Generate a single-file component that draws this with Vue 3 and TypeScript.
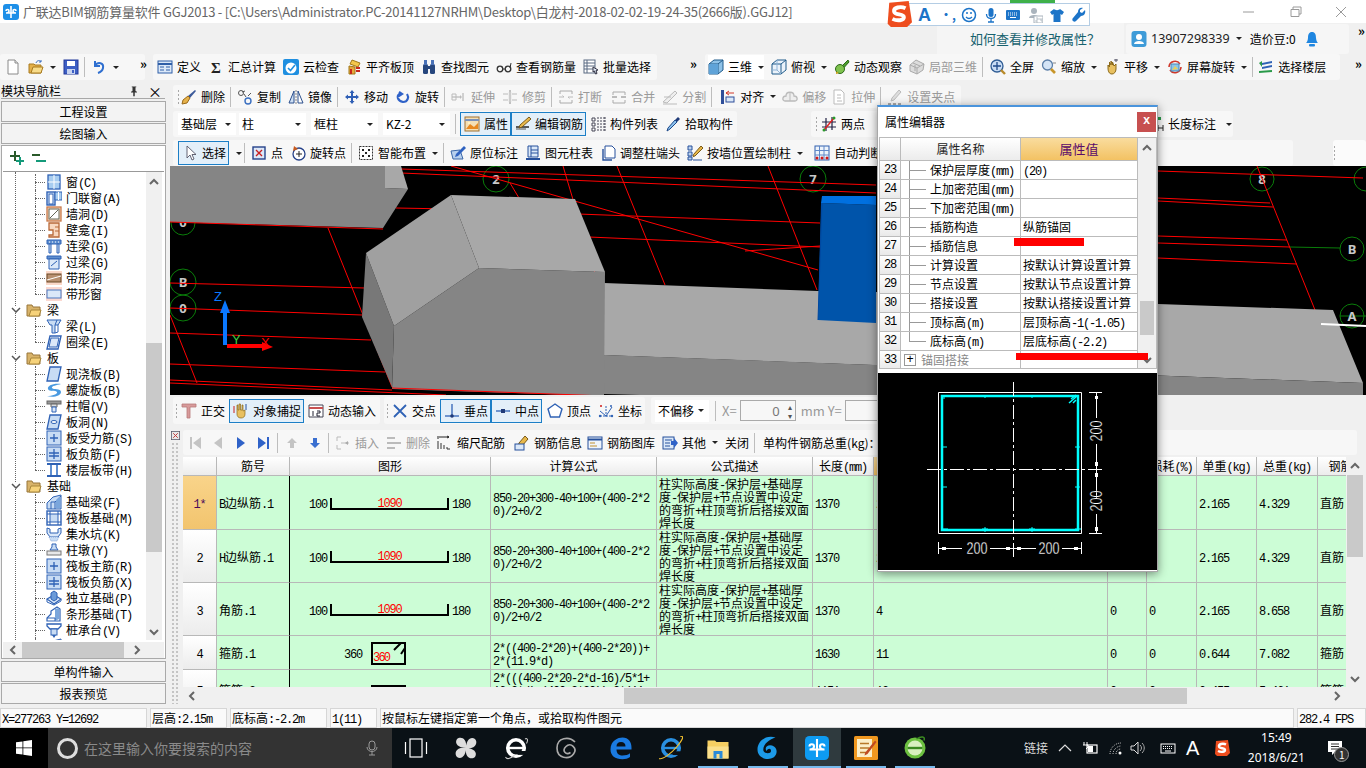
<template>
  <div class="app">
    <!-- title bar -->
    <div class="title">
      <span class="logo"><Ic n="gld" /></span>
      <span class="title-text">广联达BIM钢筋算量软件 GGJ2013 - [C:\Users\Administrator.PC-20141127NRHM\Desktop\白龙村-2018-02-02-19-24-35(2666版).GGJ12]</span>
      <div class="win-btns">
        <svg width="46" height="12"><path d="M17 6h11" stroke="#9a9a9a" /></svg>
        <svg width="46" height="12"><path d="M19 3.500h8v7h-8zM21 3v-2h8v7h-2" fill="none" stroke="#9a9a9a" /></svg>
        <svg width="46" height="12"><path d="M18 1l10 10M28 1l-10 10" stroke="#9a9a9a" /></svg>
      </div>
    </div>

    <!-- sogou IME bar floats over the title bar -->
    <div class="ime">
      <div class="ime-top"></div>
      <Ic n="sogou" class="ime-s" />
      <div class="ime-bar">
        <span class="ime-a">A</span>
        <span class="ime-dot">•,</span>
        <Ic n="smile" /><Ic n="mic" /><Ic n="kbd" /><Ic n="user24" /><Ic n="shirt" /><Ic n="wrench" />
      </div>
    </div>

    <!-- help and account strip -->
    <div class="menu">
      <div class="help">如何查看并修改属性？</div>
      <div class="account">
        <Ic n="avatar" />
        <span class="phone">13907298339</span>
        <b class="caret"></b>
        <span class="beans">造价豆:0</span>
        <Ic n="bell" />
      </div>
      <span class="more acc-more">»</span>
    </div>

    <!-- first toolbar line -->
    <div class="row1">
      <div class="grp g1a">
        <Tool v-for="(it, i) in row1a" :key="i" v-bind="it" />
        <span class="more">»</span>
      </div>
      <div class="grp g1b">
        <Tool v-for="(it, i) in row1b" :key="i" v-bind="it" />
      </div>
      <span class="more m1c">»</span>
      <div class="grp g1c">
        <Tool v-for="(it, i) in row1c" :key="i" v-bind="it" />
      </div>
      <span class="more m1d">»</span>
    </div>

    <div class="main">
      <!-- module navigator -->
      <aside class="nav">
        <div class="nav-head">
          <span>模块导航栏</span>
          <Ic n="pin" class="nav-pin" />
          <span class="nav-x">×</span>
        </div>
        <button class="nav-btn first">工程设置</button>
        <button class="nav-btn">绘图输入</button>
        <div class="nav-box">
          <div class="nav-tools"><Ic n="plusTree" /><Ic n="minusTree" /></div>
          <div class="tree-wrap">
            <div class="tree">
              <div
                v-for="(r, i) in tree"
                :key="i"
                class="tree-row"
                :class="{ folder: r.folder, last: r.last }"
              >
                <svg v-if="r.folder" class="tw" width="10" height="6"><path d="M1 1l4 4 4-4" fill="none" stroke="#555" stroke-width="1.500" /></svg>
                <Ic :n="r.ic" />
                <span><Tx :t="r.t" /></span>
              </div>
            </div>
            <div class="vscroll tree-v">
              <Ic n="chevU" />
              <div class="thumb"></div>
              <Ic n="chevD" class="down" />
            </div>
          </div>
          <div class="hscroll tree-h">
            <Ic n="chevL" />
            <div class="thumb"></div>
            <Ic n="chevR" class="right" />
          </div>
        </div>
        <button class="nav-btn btm">单构件输入</button>
        <button class="nav-btn">报表预览</button>
      </aside>

      <section class="work">
        <div class="bar r2">
          <div class="grp g2">
            <i class="grip"></i>
            <Tool v-for="(it, i) in row2" :key="i" v-bind="it" />
          </div>
        </div>

        <div class="bar r3">
          <div class="grp g3">
            <div v-for="c in combos" :key="c.t" class="combo" :style="{ width: c.w + 'px', marginRight: c.gap + 'px' }">
              <span>{{ c.t }}</span><b class="caret"></b>
            </div>
            <Tool v-for="(it, i) in row3" :key="i" v-bind="it" />
          </div>
          <div class="grp g3b">
            <i class="grip"></i>
            <Tool ic="twopt" t="两点" />
            <span class="len-mark"><Ic n="len" /><span>长度标注</span><b class="caret"></b></span>
          </div>
        </div>

        <div class="bar r4">
          <div class="grp g4">
            <Tool v-for="(it, i) in row4" :key="i" v-bind="it" />
          </div>
          <div class="end-grip"><i class="grip"></i></div>
        </div>

        <!-- 3D view: a free canvas, page coordinates -->
        <svg class="view" viewBox="170 166 1196 229" width="1196" height="229">
          <rect x="170" y="166" width="1196" height="229" fill="#000" />
          <g fill="none" stroke="#0a7d0a">
            <circle cx="496" cy="179" r="13" /><circle cx="813" cy="179" r="13" />
            <circle cx="183" cy="223" r="12" /><circle cx="183" cy="282" r="13" /><circle cx="183" cy="308" r="13" />
            <circle cx="1262" cy="179" r="12" /><circle cx="1366" cy="179" r="12" />
            <circle cx="1352" cy="249" r="12" /><circle cx="1352" cy="316" r="12" />
            <path d="M1290 247l50 1M1340 316h26" />
          </g>
          <g font-family="'Noto Sans',sans-serif" font-size="13" font-weight="700" fill="#c8c8c8" text-anchor="middle">
            <text x="496" y="184">2</text><text x="813" y="184">7</text><text x="1262" y="184">8</text>
            <text x="183" y="287">B</text><text x="183" y="313">0</text><text x="183" y="227">0</text>
            <text x="1352" y="254">B</text><text x="1352" y="321">A</text>
          </g>
          <g stroke="#f00" fill="none">
            <path v-for="(d, i) in redLines" :key="i" :d="d" />
          </g>
          <path d="M170 166H385V188L408 189 383 228 170 222z" fill="#858585" />
          <path d="M385 166h16l7 23-23-1z" fill="#a8a8a8" />
          <path d="M604 283L818 291 876 292 1158 304 1333 310 1363 383 601 355z" fill="#a8a8a8" />
          <path d="M392 388L605 355 1363 383V395H640z" fill="#858585" />
          <path d="M366 253L394 326 392 387 362 317z" fill="#787878" />
          <path d="M394 326L479 268 605 272 604 396 392 389z" fill="#858585" />
          <path d="M366 253L451 195 479 268 394 326z" fill="#a0a0a0" />
          <path d="M451 195L575 199 605 272 479 268z" fill="#a8a8a8" />
          <path d="M821 203L876 205V323L818 320z" fill="#0054aa" />
          <path d="M822 196L876 196V205L821 203z" fill="#0070e0" />
          <path d="M818 320l4-117" stroke="#0048a0" />
          <path d="M392 388L605 396" stroke="#f00" />
          <path d="M170 222L383 229" stroke="#f00" />
          <path d="M225 345V312" stroke="#0a78ff" stroke-width="4" />
          <path d="M225 300l-5 13h10z" fill="#0a78ff" />
          <path d="M227 346h38" stroke="#f00" stroke-width="4" />
          <path d="M273 347l-11-5v9z" fill="#f00" />
          <g font-family="'Liberation Sans',sans-serif" font-size="13">
            <text x="214" y="301" fill="#0a78ff">Z</text>
            <text x="232" y="344" fill="#3ecf3e">Y</text>
            <text x="261" y="347" fill="#f00">X</text>
          </g>
          <path d="M1321 324l45 2" stroke="#fff" stroke-width="2" />
        </svg>

        <div class="bar r5">
          <div class="grp g5a">
            <i class="grip"></i>
            <Tool v-for="(it, i) in snap1" :key="i" v-bind="it" />
          </div>
          <div class="grp g5b">
            <i class="grip"></i>
            <Tool v-for="(it, i) in snap2" :key="i" v-bind="it" />
          </div>
          <div class="grp g5c">
            <div class="combo offset"><span>不偏移</span><b class="caret"></b></div>
            <i class="sep"></i>
            <span class="dim">X=</span>
            <div class="spin">0<span class="spin-arrows">▴<br />▾</span></div>
            <span class="dim">mm Y=</span>
            <div class="spin">0</div>
          </div>
        </div>

        <div class="lower">
          <div class="side-grip"><Ic n="closeBox" class="side-x" /></div>
          <div class="lower-body">
            <div class="grp lower-bar">
              <Tool v-for="(it, i) in lowerBar" :key="i" v-bind="it" />
              <span class="total">单构件钢筋总重(kg)：</span>
            </div>
            <div class="tbl-frame">
              <div class="tbl-clip">
                <table class="rebar">
                  <colgroup><col v-for="(w, i) in colWidths" :key="i" :style="{ width: w + 'px' }" /></colgroup>
                  <thead>
                    <tr>
                      <th v-for="(c, i) in columns" :key="i" :class="{ cur: i === 6 }"><Tx :t="c" /></th>
                    </tr>
                  </thead>
                  <tbody>
                    <tr v-for="(r, i) in rows" :key="i" :style="{ height: r.h + 'px' }">
                      <td class="num" :class="{ cur: i === 0 }"><Tx :t="r.n" /></td>
                      <td class="name"><Tx :t="r.name" /></td>
                      <td class="shape">
                        <div v-if="r.kind === 'bar'" class="shape-bar">
                          <span><Tx t="100" /></span>
                          <div class="u-bar"><Tx t="1090" /></div>
                          <span><Tx t="180" /></span>
                        </div>
                        <div v-else class="shape-tie" :class="{ clipped: r.n === '5' }">
                          <span v-if="r.n === '4'"><Tx t="360" /></span>
                          <svg width="36" height="24" viewBox="0 0 36 24">
                            <path d="M1 2h33v21H1z" fill="none" stroke="#000" stroke-width="2" />
                            <path d="M23 9l7-7M30 13l4-6" stroke="#000" stroke-width="2" />
                            <text v-if="r.n === '4'" x="2" y="20" fill="#f00" font-size="12" font-family="'Liberation Mono',monospace" textLength="18">360</text>
                          </svg>
                        </div>
                      </td>
                      <td class="wrapcell"><Tx :t="r.f" /></td>
                      <td class="desc"><Tx :t="r.d" /></td>
                      <td><Tx :t="r.len" /></td>
                      <td><Tx :t="r.cnt" /></td>
                      <td><Tx t="0" /></td>
                      <td><Tx t="0" /></td>
                      <td><Tx :t="r.unit" /></td>
                      <td><Tx :t="r.total" /></td>
                      <td><Tx :t="r.kindName" /></td>
                    </tr>
                  </tbody>
                </table>
              </div>
              <div class="vscroll tbl-v">
                <Ic n="chevU" />
                <div class="thumb"></div>
                <Ic n="chevD" class="down" />
              </div>
            </div>
            <div class="hscroll tbl-h">
              <Ic n="chevL" />
              <div class="thumb"></div>
              <Ic n="chevR" class="right" />
            </div>
          </div>
        </div>
      </section>
    </div>

    <!-- status bar -->
    <div class="status">
      <div v-for="s in statusCells" :key="s.t" class="cell" :style="{ width: s.w + 'px' }"><Tx :t="s.t" /></div>
    </div>

    <!-- windows taskbar -->
    <div class="taskbar">
      <div class="start"><Ic n="winLogo" /></div>
      <div class="search">
        <span class="cortana"></span>
        <span class="search-text">在这里输入你要搜索的内容</span>
        <Ic n="micGray" class="search-mic" />
      </div>
      <div
        v-for="a in taskApps"
        :key="a.ic"
        class="slot"
        :class="{ run: a.run, active: a.active }"
        :style="{ marginLeft: a.m + 'px' }"
      >
        <Ic :n="a.ic" />
      </div>
      <div class="tray">
        <span class="links">链接</span>
        <svg width="14" height="10"><path d="M1 8l6-6 6 6" fill="none" stroke="#ddd" stroke-width="1.200" /></svg>
        <Ic n="plug" />
        <Ic n="wifi" />
        <Ic n="speaker" class="tray-spk" />
        <Ic n="trayKbd" />
        <span class="tray-a">A</span>
        <Ic n="sogou" class="tray-s" />
        <div class="clock">15:49<br />2018/6/21</div>
        <div class="notif"><Ic n="note" /><span class="badge">1</span></div>
      </div>
    </div>

    <!-- property editor dialog -->
    <div class="dialog">
      <div class="dlg-head">
        <span>属性编辑器</span>
        <span class="dlg-close">x</span>
      </div>
      <div class="dlg-grid">
        <div class="dlg-table">
          <div class="dlg-row hd">
            <span class="rn"></span>
            <span class="pname">属性名称</span>
            <span class="pval">属性值</span>
          </div>
          <div v-for="p in props" :key="p.n" class="dlg-row">
            <span class="rn">{{ p.n }}</span>
            <span class="pname" :class="{ lastp: p.n === 32, group: p.n === 33 }">
              <i v-if="p.n === 33" class="plusbox">+</i>
              <Tx :t="p.k" />
            </span>
            <span class="pval"><Tx :t="p.v" /></span>
          </div>
        </div>
        <div class="vscroll dlg-v">
          <Ic n="chevU" />
          <div class="thumb"></div>
          <Ic n="chevD" class="down" />
        </div>
      </div>
      <svg class="preview" viewBox="878 373 279 197" width="279" height="197">
        <rect x="878" y="373" width="279" height="197" fill="#000" />
        <path d="M938.500 392.500H1081.500V533.500H938.500z" fill="none" stroke="#fff" />
        <path d="M942 396H1078V530H942z" fill="none" stroke="#0ff" stroke-width="2.500" />
        <path d="M1071 399l5-4M1069 403l7-6M1073 403l3-3" stroke="#0ff" stroke-width="1.500" />
        <g stroke="#0ff">
          <path d="M985 397v1M1032 397v1M985 527v5M982 529h6M1032 527v5M1029 529h6M1075 529h6M1078 526v5M942 529h6M942 447h5M942 487h5M1075 447h5M1078 444v6M1075 487h5M1078 484v6M942 398h3" />
        </g>
        <g stroke="#fff" stroke-dasharray="14 3 3 3">
          <path d="M1013.500 382V559" />
          <path d="M927 469.500H1104" />
        </g>
        <g stroke="#fff" fill="none">
          <path d="M1089 392.500h13M1089 533.500h13M938.500 542v12M1081.500 542v12" />
          <path d="M1096.500 393v25M1096.500 444v54M1096.500 514v20M938 548.500h24M990 548.500h46M1062 548.500h20" />
        </g>
        <g fill="#fff">
          <rect x="1095" y="396" width="3" height="3" /><rect x="1095" y="462" width="3" height="4" />
          <rect x="1095" y="473" width="3" height="4" /><rect x="1095" y="527" width="3" height="4" />
          <rect x="942" y="547" width="4" height="3" /><rect x="1006" y="547" width="4" height="3" />
          <rect x="1017" y="547" width="4" height="3" /><rect x="1074" y="547" width="4" height="3" />
        </g>
        <g fill="#fff" font-family="'Liberation Sans',sans-serif" font-size="16" text-anchor="middle" stroke="#000" stroke-width="0.300">
          <text x="977" y="554" textLength="21" lengthAdjust="spacingAndGlyphs">200</text>
          <text x="1049" y="554" textLength="21" lengthAdjust="spacingAndGlyphs">200</text>
          <text transform="translate(1102,431) rotate(-90)" textLength="21" lengthAdjust="spacingAndGlyphs">200</text>
          <text transform="translate(1102,501) rotate(-90)" textLength="21" lengthAdjust="spacingAndGlyphs">200</text>
        </g>
      </svg>
      <i class="mark m-a"></i>
      <i class="mark m-b"></i>
    </div>
  </div>
</template>

<script setup lang="ts">
import { h, Fragment } from 'vue'

interface Item {
  ic?: string
  t?: string
  off?: boolean
  on?: boolean
  caret?: boolean
  lite?: boolean
  sep?: boolean
  m?: number
}

const icons: Record<string, string> = {
  gld: '<rect width="16" height="16" rx="3" fill="#1c8fe8"/><path d="M8 2v12M3 7c0-2 3-2 3 0s-3 2-3 2h10s-3 0-3-2 3-2 3 0" fill="none" stroke="#fff" stroke-width="1.600"/>',
  sogou: '<path d="M2 1l12-1 2 13-3 3H3L1 14z" fill="#ee4d1e"/><path d="M12 4.500C9 3 4.500 4 5 6.500 5.500 9 11 7.500 11 10c0 2-4 2.500-7 1" fill="none" stroke="#fff" stroke-width="2.400"/>',
  smile: '<circle cx="8" cy="8" r="6.500" fill="#fff" stroke="#1c74c8" stroke-width="1.500"/><circle cx="6" cy="6" r="1" fill="#1c74c8"/><circle cx="10" cy="6" r="1" fill="#1c74c8"/><path d="M5 10c2 2 4 2 6 0" fill="none" stroke="#1c74c8" stroke-width="1.300"/>',
  mic: '<rect x="5.500" y="1" width="5" height="9" rx="2.500" fill="#1c74c8"/><path d="M3.500 7c0 6 9 6 9 0M8 12v3M5 15h6" fill="none" stroke="#1c74c8" stroke-width="1.300"/>',
  kbd: '<rect x="1" y="3" width="14" height="10" rx="1" fill="#1c74c8"/><path d="M3 6h10M3 8h10" stroke="#fff" stroke-dasharray="1 1"/><path d="M5 10.500h6" stroke="#fff"/>',
  user24: '<circle cx="7" cy="4" r="3" fill="#aab4bd"/><path d="M2 11c0-4 10-4 10 0z" fill="#aab4bd"/><rect x="7" y="9" width="9" height="7" fill="#fff" stroke="#aab4bd"/><path d="M9 11h2v2H9v2h2M13 11v2h2M15 11v4" fill="none" stroke="#aab4bd" stroke-width=".8"/>',
  shirt: '<path d="M5 2L1 5l2 3 1.500-1v8h7V7L13 8l2-3-4-3c-1 1.500-5 1.500-6 0z" fill="#1c74c8"/>',
  wrench: '<path d="M14 3l-3 3-2-1 0-2 3-2c-3-1-5 1-5 4L2 11c-2 2 1 5 3 3l5-5c3 0 5-3 4-6z" fill="#1c74c8"/>',
  avatar: '<rect x=".5" y="0" width="15" height="16" rx="3" fill="#3e9bd8"/><circle cx="8" cy="6" r="3" fill="#fff"/><path d="M3 13c0-4 10-4 10 0z" fill="#fff"/>',
  bell: '<path d="M8 1c3 0 4 2.500 4 6 0 3 2 5 2 5H2s2-2 2-5c0-3.500 1-6 4-6z" fill="#1f86e0"/><rect x="5" y="13" width="6" height="2.500" rx="1" fill="#1f86e0"/>',
  new: '<path d="M3 1h7l3 3v11H3z" fill="#fff" stroke="#8a8a8a"/><path d="M10 1v3h3" fill="#e8e8e8" stroke="#8a8a8a"/>',
  open: '<path d="M1 5h5l1 1h6v8H1z" fill="#e4b04a" stroke="#a87a20"/><path d="M3 14l2-6h10l-2 6z" fill="#f8dc8a" stroke="#a87a20"/><path d="M8 4c1-3 4-3 5-1M13 1v2h-2" stroke="#3a6fc0" fill="none"/>',
  save: '<rect x="1" y="1" width="14" height="14" fill="#3d5fc4" stroke="#23389a"/><rect x="4" y="2" width="8" height="5" fill="#fff"/><rect x="4" y="10" width="8" height="5" fill="#c8d4f0"/><rect x="9" y="11" width="2" height="3" fill="#3d5fc4"/>',
  undo: '<path d="M4 2v5h5M4 7c3-5 9-3 8 2-.4 2-2 4-5 5" fill="none" stroke="#2f6fd0" stroke-width="2"/>',
  def: '<rect x="1" y="2" width="14" height="12" fill="#dbe8f8" stroke="#2f5fa8"/><path d="M1 5h14" stroke="#2f5fa8" stroke-width="2"/><path d="M3 8h4M3 11h4M9 8h4M9 11h4" stroke="#2f5fa8"/>',
  sigma: '<text x="8" y="14" font-size="15" font-weight="700" text-anchor="middle" font-family="Liberation Serif" fill="#222">Σ</text>',
  cloud: '<rect width="16" height="16" rx="2" fill="#1f8fe0"/><circle cx="8" cy="9" r="5.500" fill="#fff"/><path d="M5 9l2.500 2.500L12 6" fill="none" stroke="#1f8fe0" stroke-width="1.600"/>',
  flat: '<path d="M6 1l8 3-2 4-8-3z" fill="#f3c74c" stroke="#a07818"/><path d="M3 7l6 1v7H3z" fill="#e8a83c" stroke="#a07818"/><path d="M10 9h4M10 12h4M5 10v5" stroke="#c8281e" stroke-width="2"/>',
  find: '<rect x="2" y="5" width="5" height="10" rx="1.500" fill="#27477e"/><rect x="9" y="5" width="5" height="10" rx="1.500" fill="#27477e"/><rect x="3" y="1" width="3" height="5" fill="#4a72b8"/><rect x="10" y="1" width="3" height="5" fill="#4a72b8"/><rect x="6" y="7" width="4" height="3" fill="#27477e"/>',
  glass: '<circle cx="4" cy="10" r="2.800" fill="none" stroke="#333" stroke-width="1.300"/><circle cx="12" cy="10" r="2.800" fill="none" stroke="#333" stroke-width="1.300"/><path d="M6.500 10h3M14 9l1-5" stroke="#333"/>',
  batch: '<rect x="1" y="1" width="11" height="13" fill="#fff" stroke="#5a6a82"/><path d="M1 4h11M1 7h11M1 10h11M4 1v13" stroke="#5a6a82"/><path d="M10 8l5 3-2 .5 1 3-1.500.5-1-3-1.500 1z" fill="#dfe8f5" stroke="#334"/>',
  cube: '<path d="M1 5l5-4h9v10l-5 4H1z" fill="#8ec2e8" stroke="#1e5a8a"/><path d="M1 5h9v10M10 5l5-4" fill="none" stroke="#1e5a8a"/><path d="M1 5h9v10H1z" fill="#5fa3d8"/>',
  cubeTop: '<path d="M1 5l5-4h9v10l-5 4H1z" fill="#eaf2fa" stroke="#1e5a8a"/><path d="M1 5h9v10M10 5l5-4" fill="none" stroke="#1e5a8a"/><path d="M6 1v10H1m5 0l4 4" fill="none" stroke="#8fb4d8"/>',
  orbit: '<path d="M14 1l1 2-8 9-3 1 1-3z" fill="#4c9e2c" stroke="#2c6a18"/><ellipse cx="6" cy="10" rx="4.500" ry="4.500" fill="#7fc24e" stroke="#2c6a18"/><path d="M2 13c2-1 4 2 0 2z" fill="#c8a020"/>',
  local3d: '<path d="M1 6l6-5 8 4-1 6-6 4-7-3z" fill="#dcdcdc" stroke="#aaa"/><path d="M1 6l7 3 7-4M8 9v6M4 4l7 3M6 12V6" fill="none" stroke="#aaa"/>',
  full: '<circle cx="7" cy="7" r="6" fill="#c8dcf4" stroke="#2f5c94" stroke-width="1.300"/><path d="M7 3v8M3 7h8" stroke="#1f4a8a" stroke-width="1.300"/><path d="M11 11l4 4" stroke="#b88a2a" stroke-width="2.400"/>',
  zoom: '<circle cx="6.500" cy="6" r="5" fill="#d4e4f6" stroke="#5c7fa8" stroke-width="1.300"/><path d="M10 10l4 4" stroke="#c8962a" stroke-width="2.600"/><path d="M12 4h3" stroke="#888"/>',
  pan: '<path d="M4 9V6l1.500 2V3l1.500 3V2l1.500 4V3L10 7l2-2v5c0 3-2 5-4 5-3 0-4-3-4-6z" fill="#e8c060" stroke="#8a6818"/><path d="M10 1h4M12 0v3" stroke="#556"/>',
  rot: '<path d="M2 8a6 6 0 0 1 11-3" fill="none" stroke="#d0382a" stroke-width="1.600"/><path d="M14 8a6 6 0 0 1-11 3" fill="none" stroke="#d0382a" stroke-width="1.600"/><rect x="4" y="5" width="8" height="7" fill="#8cc6e8" stroke="#4888b8"/><path d="M5 11l3-4 3 3" fill="#e8d05c"/>',
  floor: '<path d="M4 4l10-2v2L4 6zM4 8l10-2v2L4 10z" fill="#2f62b5"/><path d="M1 12l13-1v2L1 14z" fill="#2a9a4a"/><path d="M1 4l3-2v6z" fill="#2a9a4a"/>',
  del: '<path d="M14 1l1 1-6 7-2-2z" fill="#3c5a9a"/><path d="M7 7l2 2-3 5-5 1 1-4z" fill="#e6b24a" stroke="#9a6a1a"/>',
  copy: '<circle cx="4" cy="4" r="2.500" fill="none" stroke="#555"/><circle cx="11" cy="12" r="3" fill="none" stroke="#3a6fc0" stroke-width="1.400"/><path d="M5 3l3-1M7 5l2 3M14 4l-3 3" stroke="#555"/>',
  mirror: '<path d="M6 2v12H1z" fill="#cfe0f4" stroke="#2a4e8c"/><path d="M10 2v12h5z" fill="#fff" stroke="#2a4e8c"/><path d="M8 1v14" stroke="#888" stroke-dasharray="2 1"/>',
  move: '<path d="M8 1l2.500 3H9v3h3V5.500L15 8l-3 2.500V9H9v3h1.500L8 15l-2.500-3H7V9H4v1.500L1 8l3-2.500V7h3V4H5.500z" fill="#2f5fb5"/>',
  rotate: '<path d="M4 3l3 2-3 2V5.500C2 7 2 12 8 13c5 0 6-5 4-8" fill="none" stroke="#2f62c8" stroke-width="2.200"/>',
  ext: '<path d="M1 8h8M12 4v8" stroke="#aaa"/><path d="M1 5h4v6H1z" fill="none" stroke="#bbb"/><path d="M9 6l2 2-2 2" fill="#bbb"/>',
  trim: '<path d="M1 5h14M1 11h14M8 1v14" stroke="#bbb"/><path d="M6 3h4v10H6z" fill="#eee"/><path d="M8 1v14" stroke="#aaa"/>',
  brk: '<path d="M2 2h12M2 14h12M2 2v3M14 2v3M2 11v3M14 11v3" stroke="#aaa"/><path d="M1 8h5l-1.500-1.500M15 8h-5l1.500 1.500" fill="none" stroke="#bbb"/>',
  merge: '<path d="M2 3h12M2 14h12M2 3v3M14 3v3M2 11v3M14 11v3" stroke="#aaa"/><path d="M1 8h5M10 8h5" stroke="#bbb" stroke-width="2"/>',
  split: '<path d="M1 13L13 2l2 2L5 14z" fill="#eee" stroke="#bbb"/><path d="M1 15h14M2 8h7" stroke="#bbb"/>',
  align: '<path d="M1 1h3v14H1z" fill="#2f4f9a"/><path d="M6 4h8M6 4l3-2M6 4l3 2" stroke="#d0382a" fill="none"/><rect x="6" y="8" width="8" height="5" fill="#dbe8f8" stroke="#2f4f9a"/>',
  offset: '<path d="M3 12c-3 0-3-5 1-5 0-5 8-5 8 0 4 0 4 5 1 5z" fill="#eee" stroke="#bbb" stroke-width="1.300"/><path d="M8 4v8" stroke="#bbb"/>',
  stretch: '<path d="M3 1h7l3 3v11H3z" fill="#fff" stroke="#bbb"/><path d="M6 6h4M6 9h4M6 12h5" stroke="#bbb"/>',
  grippt: '<path d="M12 1l2 2-7 8-3 1 1-3z" fill="#ddd" stroke="#bbb"/><path d="M1 15h3M6 15h3M11 15h3" stroke="#aaa" stroke-width="2"/>',
  attr: '<rect x="1" y="1" width="14" height="14" fill="#f4dfb4" stroke="#a07030"/><path d="M1 4h14" stroke="#7a90b8" stroke-width="2"/><path d="M2 13l4-5 4 3 4-4v6z" fill="#e8881e"/><circle cx="5" cy="7" r="1.200" fill="#fff2c0"/>',
  edit: '<path d="M1 11h13" stroke="#333" stroke-width="1.600"/><path d="M1 13h10" stroke="#555"/><path d="M14 1l2 2-9 8-3 1 1-3z" fill="#e9b84a" stroke="#7a5a18"/>',
  list: '<path d="M2 2h3v3H2zM2 7h3v3H2zM2 12h3v3H2z" fill="#fff" stroke="#445"/><path d="M7 2h8M7 5h8M7 8h8M7 11h8M7 14h8M15 1v14" stroke="#445" stroke-dasharray="2 1"/>',
  pick: '<path d="M13 1l2 2-3 3-2-2z" fill="#1f3a78"/><path d="M10 4l2 2-7 7-3 2 1-3z" fill="#8cc2ee" stroke="#1f4a8a"/>',
  twopt: '<path d="M5 2v13M11 1v13M1 6h14M1 11h14" stroke="#224" stroke-width="1.200"/><path d="M3 14L13 2" stroke="#e02020" stroke-width="1.400"/><circle cx="3" cy="14" r="1.500" fill="#2a9a2a"/><circle cx="13" cy="2" r="1.500" fill="#2a9a2a"/>',
  len: '<rect x="10" y="1" width="3" height="3" fill="#2a9a4a"/><path d="M10 9v6M15 9v6M10 12h5" stroke="#222"/>',
  select: '<path d="M5 1v12l3-3 2 5 2-1-2-4.500h4z" fill="#fff" stroke="#556" stroke-width=".9"/>',
  point: '<rect x="2" y="2" width="12" height="12" fill="#dce8f8" stroke="#26428a" stroke-width="1.400"/><path d="M5 5l6 6M11 5l-6 6" stroke="#c81e1e" stroke-width="1.400"/>',
  rotpt: '<circle cx="9" cy="9" r="6" fill="#fff" stroke="#26428a" stroke-width="1.300"/><path d="M9 6v6M6 9h6" stroke="#222"/><path d="M3 6l1-5 4 3z" fill="#c85a1e"/>',
  smart: '<rect x="1.500" y="1.500" width="13" height="13" fill="#fff" stroke="#333" stroke-dasharray="2 1"/><path d="M4 4h2v2H4zM10 4h2v2h-2zM7 7h2v2H7zM4 10h2v2H4zM10 10h2v2h-2z" fill="#222"/>',
  orig: '<path d="M1 6l9-1 3 9H3z" fill="#b8d0ee" stroke="#3c68a8"/><path d="M14 1l2 2-8 8-3 1 1-3z" fill="#2f62c0"/>',
  table: '<path d="M3 1h10v11H3z" fill="#dbe8f8" stroke="#26509c"/><path d="M6 1v11M6 5h7M6 8h7" stroke="#26509c"/><path d="M1 14h14" stroke="#26509c" stroke-width="2"/>',
  adjust: '<path d="M5 1h7l3 3v9H5z" fill="#fff" stroke="#26509c"/><path d="M3 4v11h9" fill="none" stroke="#26509c" stroke-width="1.400"/>',
  wall: '<path d="M1 1h4v4H1zM1 7h4v4H1zM1 12h4v3H1z" fill="#bcd2ee" stroke="#26509c"/><path d="M14 1l2 2-8 8-2 .5.500-2z" fill="#e8b84a" stroke="#7a5a18"/><path d="M6 15h9" stroke="#26509c"/>',
  auto: '<rect x="1" y="1" width="14" height="14" fill="#eef4fb" stroke="#3060b0"/><path d="M5.500 1v14M10 1v14M1 5.500h14M1 10h14" stroke="#6088c8"/><circle cx="3" cy="13" r="1.500" fill="#d01818"/><circle cx="8" cy="13" r="1.500" fill="#d01818"/><circle cx="13" cy="13" r="1.500" fill="#d01818"/>',
  ortho: '<path d="M1 1h14v3H9v11H6V4H1z" fill="#d89a9a" stroke="#b87878" stroke-width=".8"/>',
  snapTool: '<path d="M4 8V2h1v5h1V1h1.500v6H9V2h1v6l2-1v4c0 3-2 4-4 4-3 0-4-2-4-4z" fill="#e8c060" stroke="#8a6818" stroke-width=".7"/><path d="M1 3v7" stroke="#c81e1e"/><path d="M13 1v6" stroke="#26509c"/>',
  dyn: '<path d="M1 2h14v12H1z" fill="#fff" stroke="#445"/><path d="M1 5h14" stroke="#c85050" stroke-width="2"/><path d="M5 8v5M9 8h3v2H9v3h3" fill="none" stroke="#223"/>',
  cross: '<path d="M2 2l12 12M14 2L2 14" stroke="#2f62b5" stroke-width="1.800"/>',
  perp: '<path d="M1 13h14" stroke="#2f62b5" stroke-width="1.300"/><path d="M8 1v12" stroke="#2f62b5" stroke-width="1.300"/><circle cx="8" cy="13" r="1.800" fill="#1f3a78"/>',
  mid: '<path d="M1 8h14" stroke="#2f62b5" stroke-width="1.300"/><rect x="6" y="6" width="4" height="4" fill="#1f3a78"/>',
  vertex: '<path d="M8 1l7 5-2.500 8h-9L1 6z" fill="#fff" stroke="#2f62b5" stroke-width="1.400"/>',
  coord: '<path d="M2 13h12M8 3v11" stroke="#2f62b5" stroke-dasharray="2 1"/><path d="M2 8l6 5 6-9" fill="none" stroke="#2f62b5"/><circle cx="3" cy="3" r="1" fill="#d01818"/><circle cx="13" cy="3" r="1" fill="#2f62b5"/><circle cx="2" cy="13" r="1.200" fill="#2f62b5"/><circle cx="14" cy="13" r="1.200" fill="#2f62b5"/>',
  closeBox: '<rect x=".5" y=".5" width="11" height="11" fill="#e8e8e8" stroke="#556"/><path d="M3 3l6 6M9 3L3 9" stroke="#c03838" stroke-width="1.300"/>',
  first: '<path d="M3 2h2v12H3zM14 2v12L6 8z" fill="#c4c4c4"/>',
  prev: '<path d="M12 2v12L4 8z" fill="#c4c4c4"/>',
  next: '<path d="M4 2v12l8-6z" fill="#2f62c8"/>',
  lastr: '<path d="M2 2v12l8-6zM11 2h2v12h-2z" fill="#2f62c8"/>',
  upr: '<path d="M8 3l5 5h-3v5H6V8H3z" fill="#c4c4c4"/>',
  dnr: '<path d="M8 13L3 8h3V3h4v5h3z" fill="#3a6fd0"/>',
  ins: '<path d="M2 2h4M2 2v4M2 10v4h4M6 8h8" fill="none" stroke="#bbb"/><path d="M10 8l3-2v4z" fill="#aaa"/>',
  rm: '<path d="M1 3h8M1 8h8M1 13h8M9 8h6" fill="none" stroke="#bbb" stroke-width="2"/>',
  scale: '<path d="M1 14V6M4 14V8M7 14V10M10 14v-2M13 14h-3" stroke="#333"/><path d="M2 2h10l-2-1M12 2l-2 1M1 1v3" fill="none" stroke="#222"/>',
  info: '<path d="M11 1l3 3-6 7-4 1 1-4z" fill="#e8b84a" stroke="#7a5a18"/><rect x="1" y="9" width="9" height="6" fill="#dbe8f8" stroke="#26509c"/>',
  lib: '<rect x="1" y="2" width="14" height="12" fill="#eef4fb" stroke="#26509c"/><path d="M1 4.500h14" stroke="#26509c" stroke-width="2"/><path d="M3 8h5M3 11h7" stroke="#c09030"/>',
  other: '<rect x="1" y="2" width="11" height="12" fill="#dbe8f8" stroke="#26509c"/><path d="M3 5h7M3 8h5M3 11h5" stroke="#26509c"/><path d="M9 6h3V3l4 5-4 5v-3H9z" fill="#2f62c8"/>',
  chevU: '<path d="M4 10l4-4 4 4" fill="none" stroke="#666" stroke-width="2"/>',
  chevD: '<path d="M4 6l4 4 4-4" fill="none" stroke="#666" stroke-width="2"/>',
  chevL: '<path d="M10 4L6 8l4 4" fill="none" stroke="#666" stroke-width="2"/>',
  chevR: '<path d="M6 4l4 4-4 4" fill="none" stroke="#666" stroke-width="2"/>',
  pin: '<path d="M5 2h6v1H10v5l2 1v1H9v5H7v-5H4V9l2-1V3H5z" fill="#333"/>',
  plusTree: '<path d="M1 5h4V1h2v4h4v2H7v4H5V7H1z" fill="#2a5a2a"/><path d="M7 10h3V7h2v3h3v2h-3v3h-2v-3H7z" fill="#149a7a"/>',
  minusTree: '<path d="M1 4h8v2H1z" fill="#2a5a2a"/><path d="M5 10h10v2H5z" fill="#149a7a"/>',
  folder: '<path d="M1 3h5l1 2h7v9H1z" fill="#d8b36a" stroke="#98763a"/><path d="M3 14l2-6h10l-2 6z" fill="#f6d27a" stroke="#a8863a"/>',
  tWin: '<rect x="2" y="1" width="12" height="14" fill="#a8cdf0" stroke="#2f62b5" stroke-width="1.300"/><path d="M8 1v14M2 8h12" stroke="#fff"/>',
  tDoor: '<rect x="1" y="2" width="8" height="13" fill="#dbe8f8" stroke="#2f62b5" stroke-width="1.400"/><rect x="3" y="4" width="4" height="10" fill="#fff" stroke="#2f62b5"/><path d="M9 2h7v8H9z" fill="#a8cdf0" stroke="#2f62b5"/><path d="M12.500 2v8" stroke="#fff"/>',
  tHole: '<rect x="1" y="1" width="14" height="14" fill="#f8d8c0" stroke="#c87848" stroke-width="1.300"/><rect x="3" y="3" width="10" height="10" fill="#fff" stroke="#665"/><path d="M4 12l8-8" stroke="#665"/>',
  tNiche: '<path d="M3 1h10v14H3v-2h4V8H3z" fill="#f8d8c0" stroke="#b86838" stroke-width="1.300"/><path d="M9 5h4M9 9h4" stroke="#b86838"/>',
  tLink: '<path d="M1 2h14v4H1z" fill="#5f8fd0" stroke="#2f62b5"/><path d="M3 6h2v9H3zM11 6h2v9h-2z" fill="#c8dcf4" stroke="#2f62b5"/><path d="M3 4h1M6 4h1M9 4h1M12 4h1" stroke="#fff"/>',
  tOver: '<path d="M1 2h14v3H1z" fill="#5f8fd0" stroke="#2f62b5"/><path d="M3 5h10v10H3z" fill="#dbe8f8" stroke="#2f62b5"/><path d="M5 12l6-5" stroke="#2f62b5"/>',
  tStripH: '<rect y="1" width="16" height="14" fill="#fbd8c8"/><rect x="1" y="4" width="14" height="8" fill="#b89070" stroke="#6a4a28"/><path d="M1 10l14-4" stroke="#fff"/>',
  tStripW: '<rect y="1" width="16" height="14" fill="#fbd8d0"/><rect x="1" y="4" width="14" height="8" fill="#dbe8f8" stroke="#4a78c0"/>',
  tBeam: '<path d="M1 2h14l-3 5H9v8H6V7H4z" fill="#c8dcf4" stroke="#2f62b5"/><path d="M11 2l-2 5M12 7v7l-3 1" fill="none" stroke="#2f62b5"/>',
  tRing: '<path d="M4 2h11l-3 13H1z" fill="#fff" stroke="#2f62b5" stroke-width="1.400"/><path d="M5 4h8l-2 9H3z" fill="#dbe8f8" stroke="#2f62b5"/>',
  tSlab: '<path d="M4 1h11l-3 14H1z" fill="#c8dcf4" stroke="#2f62b5" stroke-width="1.300"/>',
  tSpiral: '<path d="M15 2C7 1 1 4 2 7s8 1 9 3-5 4-10 4c6 2 14 0 14-4s-8-2-9-4 5-3 9-4z" fill="#4a9ae0"/>',
  tCap: '<rect x="1" y="3" width="14" height="3" fill="#999" stroke="#666"/><path d="M5 6h6v3H5z" fill="#ddd" stroke="#666"/><path d="M6 9h4v5H6z" fill="#dbe8f8" stroke="#2f62b5"/>',
  tSlabH: '<path d="M4 1h11l-3 14H1z" fill="#c8dcf4" stroke="#2f62b5" stroke-width="1.300"/><ellipse cx="8" cy="8" rx="3" ry="1.500" fill="#fff" stroke="#2f62b5"/>',
  tRebar: '<rect x="1" y="1" width="14" height="14" fill="#c8dcf4" stroke="#2f62b5"/><path d="M4 8h8M8 4v8" stroke="#2f62b5" stroke-width="1.300"/>',
  tRebarN: '<rect x="1" y="1" width="14" height="14" fill="#c8dcf4" stroke="#2f62b5"/><path d="M3 7h10M3 10h10M8 3v10" stroke="#2f62b5" stroke-width="1.300"/>',
  tBand: '<path d="M1 2h14M1 14h14" stroke="#2f62b5" stroke-width="2"/><path d="M5 3v10M11 3v10" stroke="#5f8fd0" stroke-width="2"/>',
  tFBeam: '<path d="M1 15V9L7 3l8-2v14z" fill="#c8dcf4" stroke="#2f62b5"/><path d="M5 15V8h4v7M9 8l6-6" fill="none" stroke="#2f62b5"/><path d="M10 6l4-4v12h-4z" fill="#7aa6dc"/>',
  tRaft: '<rect x="1" y="1" width="14" height="14" fill="#fff" stroke="#2f62b5" stroke-width="1.400"/><rect x="4" y="4" width="8" height="8" fill="#c8dcf4" stroke="#2f62b5"/><path d="M1 4h3M1 12h3M12 4h3M12 12h3M4 1v3M12 1v3M4 12v3M12 12v3" stroke="#2f62b5"/>',
  tPit: '<path d="M1 2l3 1v4h8V3l3-1v5l-3 4H4L1 7z" fill="#dbe8f8" stroke="#2f62b5"/><path d="M3 11h10l-2 4H5z" fill="#c8dcf4" stroke="#8aa8d8" stroke-dasharray="1 1"/>',
  tPier: '<path d="M6 2h4v3l2 3H4l2-3z" fill="#c8dcf4" stroke="#2f62b5"/><rect x="1" y="9" width="14" height="4" fill="#e8e8e8" stroke="#777"/>',
  tIso: '<path d="M1 9l7-4 7 4-7 5z" fill="#dbe8f8" stroke="#2f62b5" stroke-width="1.200"/><path d="M1 9v3l7 3 7-4V9" fill="none" stroke="#2f62b5"/><path d="M5 3l3-2 3 2v6l-3 2-3-2z" fill="#6a9ad8" stroke="#2f62b5"/>',
  tStrip: '<path d="M1 15v-3l4-4V5l6-4 3 2v12z" fill="#fff" stroke="#2f62b5" stroke-width="1.200"/><path d="M9 3l4-1v11l-4 2z" fill="#7aa6dc"/><path d="M1 12h8v3" fill="none" stroke="#2f62b5"/>',
  tPile: '<path d="M1 2h14v2l-3 3H4L1 4z" fill="#fff" stroke="#2f62b5" stroke-width="1.300"/><rect x="5" y="7" width="6" height="6" fill="#c8dcf4" stroke="#2f62b5"/><path d="M6 13h4l-2 3z" fill="#2f62b5"/>',
  winLogo: '<path d="M0 2.300L6.500 1.400V7.500H0zM7.300 1.300L16 0v7.500H7.300zM0 8.300h6.500v6.300L0 13.700zM7.300 8.300H16V16l-8.700-1.200z" fill="#fff"/>',
  micGray: '<rect x="5" y="1" width="6" height="9" rx="3" fill="none" stroke="#9a9a9a"/><path d="M3 7c0 6 10 6 10 0M8 12v3M5 15h6" fill="none" stroke="#9a9a9a"/>',
  taskview: '<rect x="4" y="2" width="8" height="12" fill="none" stroke="#fff" stroke-width=".8"/><path d="M1 4v8M15 4v8" stroke="#fff" stroke-width=".8"/>',
  pinwheel: '<path d="M8 8C3 8 0 5 2 2c2-2 7-1 6 6zM8 8c0-5 3-8 6-6 2 2 1 7-6 6zM8 8c5 0 8 3 6 6-2 2-7 1-6-6zM8 8c0 5-3 8-6 6-2-2-1-7 6-6z" fill="#ddd"/>',
  eWhite: '<circle cx="8" cy="8" r="5.500" fill="none" stroke="#fff" stroke-width="2.400"/><path d="M3 8h10" stroke="#fff" stroke-width="1.600"/><path d="M9 10h7v2.600H9z" fill="#0a1116"/><path d="M1 14c1 2 3 1 6-1M14 2c2-1 2 1 1 3" fill="none" stroke="#ccc" stroke-width=".7"/>',
  swirl: '<path d="M14 4C10 0 2 1 2 8s8 8 11 4-2-8-5-5 0 6 3 4" fill="none" stroke="#aaa" stroke-width="1.100"/>',
  edge: '<path d="M1 9C1 3 6 1 9 1c4 0 6 3 6 7v1H5c0 3 2 4 4 4 2 0 4-.6 5-1.500V14c-1.500 1-3 1.500-5 1.500C4 15.500 1 13 1 9zm4-2h6c0-2-1-3-3-3S5 5 5 7z" fill="#1a7ae0"/>',
  ie: '<circle cx="8" cy="8" r="5.500" fill="none" stroke="#2a90e0" stroke-width="2.400"/><path d="M3 8h10" stroke="#2a90e0" stroke-width="1.600"/><path d="M9 10.200h6v2.500H9z" fill="#0a1116"/><path d="M0 15c2 1 8-3 12-8s5-7 2-7" fill="none" stroke="#f2c030" stroke-width=".8"/>',
  explorer: '<path d="M1 3h5l1 1h8v11H1z" fill="#f6cf62"/><path d="M1 7h14v8H1z" fill="#fbe08c"/><path d="M5 10h6v5H5z" fill="#2a8ad8"/><path d="M7 12h2v3H7z" fill="#fbe08c"/>',
  gBlue: '<path d="M13 1C6-1 1 4 1 9s5 7 9 6 5-6 2-8-7 0-5 3c1-2 3-2 3 0s-4 2-5 0c-1-4 4-8 8-9z" fill="#1c9ae8"/>',
  gldApp: '<rect width="16" height="16" rx="3" fill="#0e9bf2"/><path d="M8 2v12M3 7c0-2 3-2 3 0s-3 2-3 2h10s-3 0-3-2 3-2 3 0" fill="none" stroke="#fff" stroke-width="1.400"/>',
  notepad: '<rect width="16" height="16" rx="1" fill="#f09820"/><rect x="2" y="2" width="10" height="12" fill="#fbeec8"/><path d="M4 5h6M4 8h6M4 11h4" stroke="#b87828"/><path d="M14 3l1 1-6 8-2 1 .5-2z" fill="#c04a20"/>',
  ieGreen: '<circle cx="8" cy="8" r="7" fill="#6cc040"/><ellipse cx="8" cy="8" rx="5" ry="5" fill="#d8f0c0"/><path d="M3 8h10" stroke="#3a8a20" stroke-width="1.600"/><path d="M9 2c3-2 6-2 5 1" fill="none" stroke="#3a8a20"/>',
  plug: '<rect x="5" y="5" width="10" height="8" fill="none" stroke="#fff" stroke-width="1.200"/><rect x="6" y="6" width="5" height="6" fill="#fff"/><path d="M2 2v3M5 2v3M1 5h5v2l-2 2" fill="none" stroke="#fff"/>',
  wifi: '<path d="M2 14c0-6 5-11 11-11M5 14c0-4 4-8 8-8M8 14c0-3 2-5 5-5" fill="none" stroke="#bbb" stroke-dasharray="1 1"/><circle cx="12" cy="13" r="1.500" fill="#fff"/>',
  speaker: '<path d="M1 6h3l4-4v12l-4-4H1z" fill="none" stroke="#ddd"/><path d="M10 5c2 2 2 4 0 6M12 3c3 3 3 7 0 10" fill="none" stroke="#aaa"/>',
  trayKbd: '<rect x="1" y="4" width="14" height="9" fill="none" stroke="#fff"/><path d="M3 6.500h10M3 8.500h10" stroke="#fff" stroke-dasharray="1 1"/><path d="M5 11h6" stroke="#fff"/>',
  note: '<path d="M1 1h14v11H8l-3 3v-3H1z" fill="#fff"/><path d="M4 4h8M4 6.500h8M4 9h8" stroke="#333"/>',
}

const Ic = (p: { n: string }) =>
  h('svg', { class: 'ic', viewBox: '0 0 16 16', width: 16, height: 16, innerHTML: icons[p.n] })

// SimSun style half width latin: CJK runs stay as plain text
const Tx = (p: { t?: string }) =>
  h(
    Fragment,
    (p.t || '')
      .split(/([\x00-\x7f]+)/)
      .filter(Boolean)
      .map((s) => (/^[\x00-\x7f]/.test(s) && s !== '\n' ? h('span', { class: 'lat' }, s) : s))
  )

const Tool = (p: Item) => {
  const style = p.m !== undefined ? { marginLeft: p.m + 'px' } : undefined
  if (p.sep) return h('i', { class: 'sep', style })
  const kids = []
  if (p.ic) kids.push(Ic({ n: p.ic }))
  if (p.t) kids.push(h('span', { class: 'lbl' }, p.t))
  if (p.caret) kids.push(h('b', { class: 'caret' }))
  return h('div', { class: ['tool', { on: p.on, off: p.off, lite: p.lite }], style }, kids)
}

const row1a: Item[] = [
  { ic: 'new' },
  { ic: 'open', caret: true },
  { ic: 'save' },
  { sep: true },
  { ic: 'undo', caret: true },
]
const row1b: Item[] = [
  { ic: 'def', t: '定义' },
  { ic: 'sigma', t: '汇总计算' },
  { ic: 'cloud', t: '云检查' },
  { ic: 'flat', t: '平齐板顶' },
  { ic: 'find', t: '查找图元' },
  { ic: 'glass', t: '查看钢筋量' },
  { ic: 'batch', t: '批量选择' },
]
const row1c: Item[] = [
  { ic: 'cube', t: '三维', caret: true, lite: true },
  { ic: 'cubeTop', t: '俯视', caret: true },
  { ic: 'orbit', t: '动态观察' },
  { ic: 'local3d', t: '局部三维', off: true },
  { sep: true },
  { ic: 'full', t: '全屏', m: 1 },
  { ic: 'zoom', t: '缩放', caret: true },
  { ic: 'pan', t: '平移', caret: true },
  { ic: 'rot', t: '屏幕旋转', caret: true },
  { sep: true },
  { ic: 'floor', t: '选择楼层', m: -1 },
]
const row2: Item[] = [
  { ic: 'del', t: '删除', m: -2 },
  { sep: true },
  { ic: 'copy', t: '复制' },
  { ic: 'mirror', t: '镜像' },
  { sep: true },
  { ic: 'move', t: '移动' },
  { ic: 'rotate', t: '旋转' },
  { sep: true },
  { ic: 'ext', t: '延伸', off: true },
  { ic: 'trim', t: '修剪', off: true },
  { sep: true },
  { ic: 'brk', t: '打断', off: true },
  { ic: 'merge', t: '合并', off: true, m: 2 },
  { ic: 'split', t: '分割', off: true },
  { sep: true },
  { ic: 'align', t: '对齐', caret: true, m: 2 },
  { ic: 'offset', t: '偏移', off: true, m: -1 },
  { ic: 'stretch', t: '拉伸', off: true, m: -2 },
  { sep: true },
  { ic: 'grippt', t: '设置夹点', off: true },
]
const combos = [
  { t: '基础层', w: 58, gap: 3 },
  { t: '柱', w: 67, gap: 5 },
  { t: '框柱', w: 67, gap: 5 },
  { t: 'KZ-2', w: 67, gap: 5 },
]
const row3: Item[] = [
  { sep: true, m: 0 },
  { ic: 'attr', t: '属性', on: true, m: -2 },
  { ic: 'edit', t: '编辑钢筋', on: true },
  { ic: 'list', t: '构件列表', m: 4 },
  { ic: 'pick', t: '拾取构件' },
]
const row4: Item[] = [
  { ic: 'select', t: '选择', on: true },
  { caret: true },
  { sep: true, m: -5 },
  { ic: 'point', t: '点' },
  { ic: 'rotpt', t: '旋转点', m: 0 },
  { sep: true },
  { ic: 'smart', t: '智能布置', caret: true },
  { sep: true },
  { ic: 'orig', t: '原位标注' },
  { ic: 'table', t: '图元柱表' },
  { ic: 'adjust', t: '调整柱端头' },
  { ic: 'wall', t: '按墙位置绘制柱', caret: true },
  { ic: 'auto', t: '自动判断边角柱', m: 4 },
]
const snap1: Item[] = [
  { ic: 'ortho', t: '正交' },
  { ic: 'snapTool', t: '对象捕捉', on: true, m: -3 },
  { ic: 'dyn', t: '动态输入', m: 4 },
]
const snap2: Item[] = [
  { ic: 'cross', t: '交点' },
  { ic: 'perp', t: '垂点', on: true, m: -3 },
  { ic: 'mid', t: '中点', on: true },
  { ic: 'vertex', t: '顶点' },
  { ic: 'coord', t: '坐标' },
]
const lowerBar: Item[] = [
  { ic: 'first', off: true },
  { ic: 'prev', off: true },
  { ic: 'next' },
  { ic: 'lastr' },
  { sep: true },
  { ic: 'upr', off: true },
  { ic: 'dnr' },
  { sep: true },
  { ic: 'ins', t: '插入', off: true },
  { ic: 'rm', t: '删除', off: true },
  { ic: 'scale', t: '缩尺配筋' },
  { ic: 'info', t: '钢筋信息', m: 2 },
  { ic: 'lib', t: '钢筋图库', m: -2 },
  { ic: 'other', t: '其他', caret: true },
  { t: '关闭' },
  { sep: true },
]

const tree = [
  { ic: 'tWin', t: '窗(C)' },
  { ic: 'tDoor', t: '门联窗(A)' },
  { ic: 'tHole', t: '墙洞(D)' },
  { ic: 'tNiche', t: '壁龛(I)' },
  { ic: 'tLink', t: '连梁(G)' },
  { ic: 'tOver', t: '过梁(G)' },
  { ic: 'tStripH', t: '带形洞' },
  { ic: 'tStripW', t: '带形窗', last: true },
  { ic: 'folder', t: '梁', folder: true },
  { ic: 'tBeam', t: '梁(L)' },
  { ic: 'tRing', t: '圈梁(E)', last: true },
  { ic: 'folder', t: '板', folder: true },
  { ic: 'tSlab', t: '现浇板(B)' },
  { ic: 'tSpiral', t: '螺旋板(B)' },
  { ic: 'tCap', t: '柱帽(V)' },
  { ic: 'tSlabH', t: '板洞(N)' },
  { ic: 'tRebar', t: '板受力筋(S)' },
  { ic: 'tRebarN', t: '板负筋(F)' },
  { ic: 'tBand', t: '楼层板带(H)', last: true },
  { ic: 'folder', t: '基础', folder: true },
  { ic: 'tFBeam', t: '基础梁(F)' },
  { ic: 'tRaft', t: '筏板基础(M)' },
  { ic: 'tPit', t: '集水坑(K)' },
  { ic: 'tPier', t: '柱墩(Y)' },
  { ic: 'tRebar', t: '筏板主筋(R)' },
  { ic: 'tRebarN', t: '筏板负筋(X)' },
  { ic: 'tIso', t: '独立基础(P)' },
  { ic: 'tStrip', t: '条形基础(T)' },
  { ic: 'tPile', t: '桩承台(V)' },
  { ic: 'tFBeam', t: '承台梁(F)' },
]

const redLines = [
  'M401 169L876 185', 'M401 173L876 193', 'M451 166L818 270', 'M563 166L600 290', 'M617 166L665 285',
  'M768 166L817 290', 'M510 183L519 198', 'M578 214L820 223', 'M589 237L820 247', 'M745 251L820 246',
  'M328 228L392 387', 'M170 283L365 288', 'M170 308L362 315', 'M170 333L371 340', 'M170 364L385 372',
  'M170 380L392 390', 'M170 383L446 395', 'M396 208L451 209', 'M170 315L197 383',
  'M1158 171L1363 178', 'M1158 198L1270 203', 'M1158 201L1273 207', 'M1158 236L1287 240',
  'M1158 243L1290 247', 'M1158 258L1297 264', 'M1257 166L1315 310',
]

const colWidths = [34, 73, 201, 166, 156, 61, 234, 39, 50, 60, 61, 70]
const columns = ['', '筋号', '图形', '计算公式', '公式描述', '长度(mm)', '根数', '搭接', '损耗(%)', '单重(kg)', '总重(kg)', '钢筋归类']

const edgeF = '850-20+300-40+100+(400-2*20)/2+0/2'
const edgeD = '柱实际高度-保护层+基础厚\n度-保护层+节点设置中设定\n的弯折+柱顶弯折后搭接双面\n焊长度'
const rows = [
  { n: '1*', h: 54, kind: 'bar', name: 'B边纵筋.1', f: edgeF, d: edgeD, len: '1370', cnt: '2', unit: '2.165', total: '4.329', kindName: '直筋' },
  { n: '2', h: 53, kind: 'bar', name: 'H边纵筋.1', f: edgeF, d: edgeD, len: '1370', cnt: '2', unit: '2.165', total: '4.329', kindName: '直筋' },
  { n: '3', h: 53, kind: 'bar', name: '角筋.1', f: edgeF, d: edgeD, len: '1370', cnt: '4', unit: '2.165', total: '8.658', kindName: '直筋' },
  { n: '4', h: 34, kind: 'tie', name: '箍筋.1', f: '2*((400-2*20)+(400-2*20))+2*(11.9*d)', d: '', len: '1630', cnt: '11', unit: '0.644', total: '7.082', kindName: '箍筋' },
  { n: '5', h: 34, kind: 'tie', name: '箍筋.2', f: '2*(((400-2*20-2*d-16)/5*1+16+2*d)+(400-2*20))+2*(11.9*d)', d: '', len: '1151', cnt: '12', unit: '0.455', total: '5.461', kindName: '箍筋' },
]

const statusCells = [
  { t: 'X=277263 Y=12692', w: 147 },
  { t: '层高:2.15m', w: 77 },
  { t: '底标高:-2.2m', w: 97 },
  { t: '1(11)', w: 47 },
  { t: '按鼠标左键指定第一个角点，或拾取构件图元', w: 914 },
  { t: '282.4 FPS', w: 69 },
]

const taskApps = [
  { ic: 'taskview', m: 0 },
  { ic: 'pinwheel', m: 2 },
  { ic: 'eWhite', m: 2 },
  { ic: 'swirl', m: 2 },
  { ic: 'edge', m: 7 },
  { ic: 'ie', m: 2 },
  { ic: 'explorer', m: -1, run: true },
  { ic: 'gBlue', m: 2, run: true },
  { ic: 'gldApp', m: 1, run: true, active: true },
  { ic: 'notepad', m: 1, run: true },
  { ic: 'ieGreen', m: 1, run: true },
]

const props = [
  { n: 23, k: '保护层厚度(mm)', v: '(20)' },
  { n: 24, k: '上加密范围(mm)', v: '' },
  { n: 25, k: '下加密范围(mm)', v: '' },
  { n: 26, k: '插筋构造', v: '纵筋锚固' },
  { n: 27, k: '插筋信息', v: '' },
  { n: 28, k: '计算设置', v: '按默认计算设置计算' },
  { n: 29, k: '节点设置', v: '按默认节点设置计算' },
  { n: 30, k: '搭接设置', v: '按默认搭接设置计算' },
  { n: 31, k: '顶标高(m)', v: '层顶标高-1(-1.05)' },
  { n: 32, k: '底标高(m)', v: '层底标高(-2.2)' },
  { n: 33, k: '锚固搭接', v: '' },
]
</script>

<style>
body {
  margin: 0;
  background: #f0f0f0;
}
.ic {
  display: block;
  flex: none;
}
.lat {
  font-family: "Liberation Mono", monospace;
  font-size: 12px;
  letter-spacing: -1.2px;
  line-height: 0;
}
.tool {
  display: flex;
  align-items: center;
  gap: 4px;
  height: 24px;
  margin-right: 7px;
  white-space: nowrap;
  flex: none;
}
.tool.off {
  color: #9a9a9a;
}
.tool.lite {
  background: #fff;
}
.tool.on {
  border: 1px solid #1b7ec6;
  background: #e3eff9;
  padding: 0 2px 0 3px;
  margin-right: 0;
  box-sizing: border-box;
}
.tool.on + .tool:not(.on) {
  margin-left: 5px;
}
.caret {
  display: inline-block;
  width: 0;
  height: 0;
  margin-left: 2px;
  border: 3px solid transparent;
  border-top: 3px solid #222;
  border-bottom: 0;
  flex: none;
}
.sep {
  display: block;
  width: 1px;
  height: 20px;
  background: #bdbdbd;
  margin: 0 6px 0 -2px;
  flex: none;
}
</style>

<style scoped>
.app {
  position: relative;
  width: 1366px;
  height: 768px;
  overflow: hidden;
  display: flex;
  flex-direction: column;
  background: #f0f0f0;
  color: #000;
  font: 12px/16px "Noto Sans CJK SC", "Noto Sans", sans-serif;
}
button {
  font: inherit;
  color: inherit;
}

.title {
  height: 23px;
  flex: none;
  background: #fff;
  display: flex;
  align-items: center;
}
.logo {
  margin: 0 4px 0 3px;
}
.title-text {
  color: #666;
  font-size: 13px;
  white-space: nowrap;
  letter-spacing: -0.22px;
}
.win-btns {
  margin-left: auto;
  display: flex;
  padding-right: 2px;
}

.ime {
  position: absolute;
  left: 885px;
  top: 0;
  width: 206px;
  height: 32px;
}
.ime-top {
  position: absolute;
  left: 125px;
  top: 0;
  width: 45px;
  height: 4px;
  background: #3eb049;
}
.ime-s {
  position: absolute;
  left: 1px;
  top: 1px;
  width: 26px;
  height: 26px;
  z-index: 1;
}
.ime-bar {
  position: absolute;
  left: 20px;
  top: 3px;
  width: 185px;
  height: 23px;
  box-sizing: border-box;
  border: 1px solid #b4cde4;
  background: #fff;
  display: flex;
  align-items: center;
  padding-left: 12px;
  gap: 6px;
}
.ime-a {
  color: #1c74c8;
  font: 700 18px/20px "Liberation Sans", sans-serif;
  width: 14px;
}
.ime-dot {
  color: #1c74c8;
  font-weight: 700;
  width: 15px;
  line-height: 10px;
  margin-left: 2px;
}

.menu {
  height: 31px;
  flex: none;
  display: flex;
  align-items: center;
}
.help {
  margin-left: 937px;
  width: 187px;
  height: 31px;
  background: #f5f5f5;
  color: #17626e;
  font-size: 13px;
  line-height: 31px;
  box-sizing: border-box;
  padding-left: 33px;
}
.account {
  margin-left: 2px;
  width: 223px;
  height: 30px;
  background: #f6f6f6;
  border-radius: 3px;
  display: flex;
  align-items: center;
  padding-left: 5px;
  box-sizing: border-box;
}
.phone {
  font: 12.500px/16px "Noto Sans", sans-serif;
  margin-left: 4px;
  color: #222;
}
.account .caret {
  margin-left: 6px;
}
.beans {
  margin: 0 8px 0 8px;
}
.more {
  font-weight: 700;
  font-size: 13px;
  line-height: 12px;
  align-self: flex-start;
}
.acc-more {
  margin: 2px 0 0 9px;
}

.row1 {
  height: 26px;
  margin-bottom: 4px;
  flex: none;
  display: flex;
  align-items: center;
}
.grp {
  display: flex;
  align-items: center;
  background: #f7f7f7;
  border-radius: 3px;
}
.g1a {
  width: 145px;
  height: 26px;
  padding-left: 5px;
  box-sizing: border-box;
  margin-right: 8px;
}
.g1a .more {
  margin: 4px 0 0 14px;
}
.g1b {
  width: 504px;
  height: 26px;
  padding-left: 4px;
  box-sizing: border-box;
}
.m1c {
  margin: 4px 0 0 33px;
  width: 13px;
}
.g1c {
  width: 635px;
  height: 26px;
  box-sizing: border-box;
  padding-left: 3px;
  margin-left: 2px;
}
.m1d {
  margin: 4px 0 0 15px;
}

.main {
  flex: none;
  height: 624px;
  display: flex;
}

.nav {
  width: 168px;
  flex: none;
  box-sizing: border-box;
  padding-left: 1px;
  display: flex;
  flex-direction: column;
}
.nav-head {
  height: 15px;
  width: 164px;
  flex: none;
  box-sizing: border-box;
  display: flex;
  align-items: center;
  border-bottom: 1px solid #a8a8a8;
}
.nav-pin {
  margin-left: auto;
  width: 12px;
  height: 12px;
}
.nav-x {
  margin: 0 3px 0 8px;
  font-size: 14px;
}
.nav-btn {
  display: block;
  width: 165px;
  height: 21px;
  flex: none;
  margin: 0 0 1px;
  padding: 0;
  background: #f3f3f3;
  border: 1px solid #a9a9a9;
  box-sizing: border-box;
}
.nav-btn.first {
  margin-top: 2px;
}
.nav-btn.btm {
  margin-top: 2px;
}
.nav-box {
  width: 165px;
  height: 514px;
  flex: none;
  box-sizing: border-box;
  border: 1px solid #a9a9a9;
  background: #fff;
  padding: 0 1px;
}
.nav-tools {
  height: 26px;
  display: flex;
  gap: 6px;
  padding: 4px 0 0 6px;
  box-sizing: border-box;
  border-bottom: 1px solid #999;
}
.tree-wrap {
  display: flex;
  height: 468px;
}
.tree {
  position: relative;
  width: 143px;
  height: 468px;
  overflow: hidden;
  padding-top: 2px;
  box-sizing: border-box;
  flex: none;
}
.tree::before {
  content: "";
  position: absolute;
  left: 12px;
  top: 0;
  bottom: 0;
  border-left: 1px dotted #666;
}
.tree-row {
  position: relative;
  height: 16px;
  display: flex;
  align-items: center;
  padding-left: 43px;
  white-space: nowrap;
  gap: 4px;
}
.tree-row::before {
  content: "";
  position: absolute;
  left: 32px;
  top: 0;
  bottom: 0;
  border-left: 1px dotted #666;
}
.tree-row::after {
  content: "";
  position: absolute;
  left: 32px;
  top: 8px;
  width: 10px;
  border-top: 1px dotted #666;
}
.tree-row.last::before {
  bottom: 8px;
}
.tree-row.folder {
  padding-left: 23px;
  gap: 5px;
}
.tree-row.folder::before,
.tree-row.folder::after {
  display: none;
}
.tw {
  position: absolute;
  left: 8px;
  top: 5px;
  background: #fff;
}
.vscroll {
  position: relative;
  background: #f0f0f0;
  display: flex;
  flex-direction: column;
  align-items: center;
}
.vscroll .thumb {
  position: absolute;
  left: 0;
  right: 0;
  background: #c9c9c9;
}
.vscroll .down {
  position: absolute;
  bottom: 0;
}
.hscroll {
  position: relative;
  background: #f0f0f0;
  display: flex;
  align-items: center;
}
.hscroll .thumb {
  position: absolute;
  top: 0;
  bottom: 0;
  background: #c9c9c9;
}
.hscroll .right {
  position: absolute;
}
.tree-v {
  width: 16px;
  height: 468px;
  padding-top: 2px;
  box-sizing: border-box;
}
.tree-v .thumb {
  top: 171px;
  height: 209px;
}
.tree-h {
  height: 16px;
  margin-top: 2px;
  padding-left: 2px;
}
.tree-h .thumb {
  left: 19px;
  width: 102px;
}
.tree-h .right {
  left: 126px;
}

.work {
  flex: 1;
  min-width: 0;
  display: flex;
  flex-direction: column;
  padding-top: 1px;
}
.bar {
  display: flex;
  align-items: center;
  flex: none;
}
.grip {
  display: block;
  width: 3px;
  height: 16px;
  margin: 0 3px 0 0;
  flex: none;
  background: radial-gradient(circle, #a8a8a8 1px, transparent 1.100px) 0 0 / 3px 4px;
}
.r2 {
  height: 23px;
  margin-left: 5px;
}
.g2 {
  height: 23px;
  width: 788px;
  padding-left: 4px;
  box-sizing: border-box;
}
.r3 {
  height: 26px;
  margin: 3px 0 3px 5px;
}
.g3 {
  height: 26px;
  width: 564px;
  padding-left: 5px;
  box-sizing: border-box;
}
.combo {
  height: 22px;
  background: #fff;
  display: flex;
  align-items: center;
  justify-content: space-between;
  box-sizing: border-box;
  padding: 0 2px 0 3px;
  flex: none;
}
.combo .caret {
  margin-right: 3px;
}
.g3b {
  height: 26px;
  margin-left: 74px;
  width: 422px;
  padding-left: 4px;
  box-sizing: border-box;
  position: relative;
}
.len-mark {
  position: absolute;
  left: 337px;
  top: 5px;
  display: flex;
  align-items: center;
  gap: 4px;
  white-space: nowrap;
}
.len-mark .caret {
  margin-left: 6px;
}
.r4 {
  height: 26px;
  margin-left: 5px;
}
.g4 {
  height: 26px;
  width: 1120px;
  padding-left: 5px;
  box-sizing: border-box;
  overflow: hidden;
}
.end-grip {
  margin-left: 40px;
  width: 33px;
  height: 26px;
  background: #fbfbfb;
  display: flex;
  align-items: center;
  border-radius: 3px;
}
.view {
  display: block;
  flex: none;
  margin-left: 2px;
}
.r5 {
  height: 27px;
  margin: 2px 0 6px 5px;
}
.g5a {
  width: 207px;
  height: 27px;
  padding-left: 2px;
  box-sizing: border-box;
  flex: none;
}
.g5b {
  width: 261px;
  height: 27px;
  padding-left: 2px;
  box-sizing: border-box;
  margin-left: 4px;
  flex: none;
}
.g5c {
  height: 27px;
  margin-left: 6px;
  padding-left: 4px;
  width: 400px;
  flex: none;
}
.offset {
  width: 54px;
  margin-right: 8px;
  background: #fff;
}
.dim {
  color: #999;
  font-size: 13px;
  margin: 0 3px 0 0;
  white-space: nowrap;
}
.spin {
  width: 56px;
  height: 21px;
  background: #f7f7f7;
  border: 1px solid #aaa;
  box-sizing: border-box;
  display: flex;
  justify-content: flex-end;
  align-items: center;
  color: #777;
  margin-right: 5px;
  padding-right: 3px;
  font: 13px/16px "Noto Sans", sans-serif;
  gap: 8px;
}
.spin-arrows {
  font-size: 8px;
  line-height: 9px;
  color: #555;
}

.lower {
  flex: none;
  height: 274px;
  margin-left: 2px;
  display: flex;
}
.side-grip {
  width: 13px;
  flex: none;
  padding: 0 0 0 1px;
  box-sizing: border-box;
  background: radial-gradient(circle, #c4c4c4 1px, transparent 1.100px) 1px 16px / 4px 4px repeat-y, radial-gradient(circle, #c4c4c4 1px, transparent 1.100px) 5px 16px / 4px 4px repeat-y;
}
.side-x {
  width: 12px;
  height: 12px;
  margin-top: 1px;
  background: #f0f0f0;
}
.lower-body {
  flex: 1;
  min-width: 0;
}
.lower-bar {
  height: 25px;
  width: 1174px;
  padding-left: 4px;
  box-sizing: border-box;
  margin-bottom: 2px;
  white-space: nowrap;
  overflow: hidden;
}
.total {
  flex: none;
  margin-left: 2px;
}
.tbl-frame {
  display: flex;
  height: 230px;
  width: 1180px;
}
.tbl-clip {
  width: 1163px;
  height: 230px;
  overflow: hidden;
  background: #f0f0f0;
  flex: none;
}
.rebar {
  table-layout: fixed;
  border-collapse: separate;
  border-spacing: 0;
  width: 1205px;
  background: #ccfdd6;
}
.rebar th {
  height: 19px;
  font-weight: 400;
  padding: 0;
  background: linear-gradient(#fff, #ececec);
  border-right: 1px solid #b8b8b8;
  border-bottom: 1px solid #b8b8b8;
  overflow: hidden;
  white-space: nowrap;
  box-sizing: border-box;
  line-height: 16px;
}
.rebar th.cur {
  background: linear-gradient(#f9dc9e, #f3c263);
  color: #5a0a6a;
}
.rebar td {
  padding: 0 2px;
  border-right: 1px solid #b8b8b8;
  border-bottom: 1px solid #b8b8b8;
  line-height: 13px;
  overflow: hidden;
  white-space: nowrap;
  box-sizing: border-box;
  vertical-align: middle;
}
.rebar td.num {
  text-align: center;
  background: linear-gradient(#fff, #ececec);
}
.rebar td.num.cur {
  background: linear-gradient(#f9d48a, #f2c46e);
  color: #4a0a5a;
}
.rebar td.name {
  border-right-color: #000;
}
.rebar td.shape {
  padding: 0;
}
.shape-bar {
  display: flex;
  align-items: center;
  padding-left: 19px;
  gap: 3px;
}
.u-bar {
  width: 119px;
  height: 12px;
  margin-top: 2px;
  box-sizing: border-box;
  border: 2px solid #000;
  border-top: 0;
  color: #f00;
  text-align: center;
  line-height: 8px;
}
.shape-tie {
  display: flex;
  align-items: center;
  padding-left: 54px;
  gap: 9px;
}
.shape-tie svg {
  display: block;
}
.shape-tie.clipped {
  padding-left: 81px;
  padding-top: 12px;
  height: 22px;
  overflow: hidden;
}
.rebar td.wrapcell {
  white-space: normal;
  word-break: break-all;
  padding-right: 4px;
}
.rebar td.desc {
  white-space: pre-line;
}
.tbl-v {
  width: 16px;
  height: 230px;
  margin-left: 1px;
  flex: none;
  padding-top: 1px;
  box-sizing: border-box;
}
.tbl-v .thumb {
  top: 18px;
  height: 82px;
}
.tbl-h {
  width: 1180px;
  height: 17px;
  box-sizing: border-box;
  padding-left: 1px;
}
.tbl-h .thumb {
  left: 441px;
  width: 563px;
  top: 1px;
}
.tbl-h .right {
  left: 1146px;
}

.status {
  flex: none;
  height: 20px;
  display: flex;
  gap: 3px;
}
.cell {
  box-sizing: border-box;
  height: 20px;
  background: #fafafa;
  border: 1px solid #d6d6d6;
  padding-left: 1px;
  white-space: nowrap;
  line-height: 18px;
  flex: none;
}

.taskbar {
  flex: none;
  height: 40px;
  background: #0a1116;
  display: flex;
  align-items: center;
  position: relative;
}
.start {
  width: 48px;
  height: 40px;
  background: #000;
  display: flex;
  align-items: center;
  justify-content: center;
}
.search {
  width: 344px;
  height: 40px;
  background: #333;
  display: flex;
  align-items: center;
  box-sizing: border-box;
  padding-left: 9px;
  position: relative;
}
.cortana {
  width: 21px;
  height: 21px;
  box-sizing: border-box;
  border: 3px solid #ddd;
  border-radius: 50%;
}
.search-text {
  margin-left: 6px;
  color: #8a8a8a;
  font-size: 14px;
}
.search-mic {
  position: absolute;
  left: 316px;
  top: 12px;
}
.slot {
  width: 48px;
  height: 40px;
  flex: none;
  display: flex;
  align-items: center;
  justify-content: center;
  position: relative;
}
.slot :deep(.ic) {
  width: 24px;
  height: 24px;
}
.slot.active {
  background: #2f3a3e;
}
.slot.run::after {
  content: "";
  position: absolute;
  left: 4px;
  right: 4px;
  bottom: 0;
  height: 2px;
  background: #76b9ed;
}
.slot.active::after {
  left: 0;
  right: 0;
}
.tray {
  margin-left: auto;
  width: 342px;
  height: 40px;
  display: flex;
  align-items: center;
  box-sizing: border-box;
  color: #fff;
  gap: 10px;
}
.links {
  color: #ddd;
}
.tray-spk {
  margin-right: 4px;
  margin-left: -4px;
}
.tray-a {
  font: 20px/20px "Liberation Sans", sans-serif;
}
.tray-s {
  margin-left: 5px;
}
.clock {
  margin-left: 5px;
  width: 62px;
  text-align: center;
  line-height: 20px;
  font-family: "Noto Sans", sans-serif;
}
.notif {
  position: relative;
  margin-left: 10px;
}
.badge {
  position: absolute;
  left: 7px;
  top: 7px;
  width: 15px;
  height: 15px;
  border-radius: 50%;
  background: #333;
  border: 1px solid #999;
  box-sizing: border-box;
  text-align: center;
  font-size: 10px;
  line-height: 13px;
}

/* floating dialog */
.dialog {
  position: absolute;
  left: 877px;
  top: 105px;
  width: 281px;
  height: 467px;
  background: #fff;
  border: 1px solid #a8a8a8;
  border-top: 2px solid #4a94dc;
  box-sizing: border-box;
  box-shadow: 0 2px 9px rgba(0, 0, 0, 0.45);
  display: flex;
  flex-direction: column;
}
.dlg-head {
  height: 30px;
  flex: none;
  display: flex;
  align-items: center;
  padding-left: 7px;
  position: relative;
}
.dlg-close {
  position: absolute;
  right: 1px;
  top: 5px;
  width: 19px;
  height: 20px;
  background: #c75050;
  color: #fff;
  text-align: center;
  font: 700 12px/18px "Liberation Mono", monospace;
}
.dlg-grid {
  display: flex;
  height: 232px;
  flex: none;
  border: 1px solid #bbb;
  margin-left: 1px;
  width: 278px;
  box-sizing: border-box;
  background: #fff;
}
.dlg-table {
  width: 258px;
  flex: none;
  overflow: hidden;
}
.dlg-row {
  display: grid;
  grid-template-columns: 21px 120px 117px;
  height: 19px;
  line-height: 18px;
  box-sizing: border-box;
}
.dlg-row.hd {
  height: 23px;
  line-height: 21px;
  text-align: center;
  color: #222;
}
.dlg-row .rn {
  text-align: center;
  background: linear-gradient(#fff, #e9e9e9);
  border-right: 1px solid #bbb;
  border-bottom: 1px solid #bbb;
  font: 12px/18px "Liberation Mono", monospace;
  letter-spacing: -1.2px;
}
.dlg-row .pname {
  border-right: 1px solid #bbb;
  border-bottom: 1px solid #bbb;
  padding-left: 29px;
  white-space: nowrap;
  position: relative;
}
.dlg-row .pval {
  border-right: 1px solid #bbb;
  border-bottom: 1px solid #bbb;
  padding-left: 2px;
  white-space: nowrap;
  overflow: hidden;
}
.dlg-row.hd .pname {
  padding-left: 0;
  background: linear-gradient(#fff, #ececec);
}
.dlg-row.hd .pval {
  padding-left: 0;
  background: linear-gradient(#f9dc9e, #f3c263);
  color: #5a0a6a;
  font-size: 13px;
}
.dlg-row:not(.hd) .pname::before {
  content: "";
  position: absolute;
  left: 8px;
  top: 0;
  bottom: 0;
  border-left: 1px solid #999;
}
.dlg-row:not(.hd) .pname::after {
  content: "";
  position: absolute;
  left: 8px;
  top: 9px;
  width: 17px;
  border-top: 1px solid #999;
}
.dlg-row:not(.hd) .pname.lastp::before {
  bottom: 9px;
}
.dlg-row:not(.hd) .pname.group {
  padding-left: 20px;
  color: #888;
}
.dlg-row:not(.hd) .pname.group::before,
.dlg-row:not(.hd) .pname.group::after {
  display: none;
}
.plusbox {
  position: absolute;
  left: 3px;
  top: 3px;
  width: 12px;
  height: 12px;
  box-sizing: border-box;
  border: 1px solid #999;
  font: 12px/10px "Liberation Mono", monospace;
  color: #000;
  text-align: center;
}
.dlg-v {
  width: 18px;
  flex: none;
  padding-top: 2px;
  box-sizing: border-box;
}
.dlg-v .thumb {
  top: 163px;
  height: 34px;
  left: 2px;
  right: 2px;
}
.preview {
  display: block;
  margin-top: 4px;
  flex: none;
}
.mark {
  position: absolute;
  background: #f00;
}
.m-a {
  left: 136px;
  top: 131px;
  width: 70px;
  height: 8px;
}
.m-b {
  left: 138px;
  top: 246px;
  width: 132px;
  height: 7px;
}
</style>
